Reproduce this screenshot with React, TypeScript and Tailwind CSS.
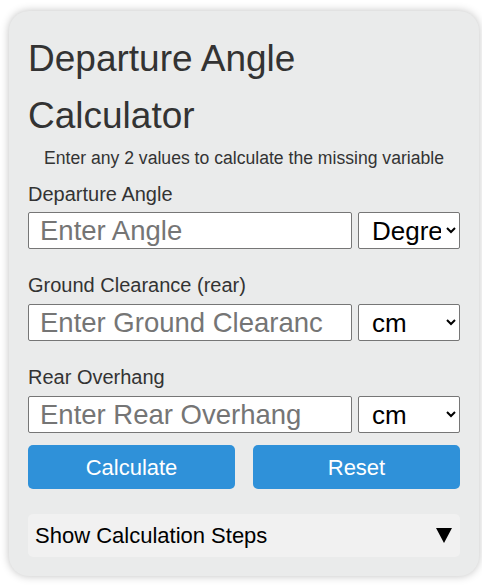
import React from "react";

const font = { fontFamily: '"Liberation Sans", Arial, sans-serif' };

function Row({ placeholder, unit }: { placeholder: string; unit: string }) {
  return (
    <div className="flex gap-[6px] h-[37px]">
      <input
        placeholder={placeholder}
        className="w-[324px] h-[37px] bg-white border border-[#767676] rounded-[2px] pl-[11px] pr-[28px] text-[27.5px] text-black placeholder:text-[#757575] outline-none"
      />
      <select
        defaultValue={unit}
        className="w-[102px] h-[37px] bg-white border border-[#767676] rounded-[2px] pl-[9px] pr-[2px] text-[26px] text-black outline-none"
      >
        <option>{unit}</option>
      </select>
    </div>
  );
}

export default function App() {
  return (
    <div className="w-[482px] h-[586px] bg-white pt-[11px] pl-[9px]" style={font}>
      <div className="w-[470px] h-[565px] bg-[#eaebeb] rounded-[20px] shadow-[0_0_8px_rgba(0,0,0,0.25)] px-[19px] pt-[19px]">
        <h1 className="text-[37px] leading-[57px] text-[#333]">
          Departure Angle Calculator
        </h1>
        <p className="mt-[4px] text-center text-[17.6px] leading-[20px] text-[#333]">
          Enter any 2 values to calculate the missing variable
        </p>
        <div className="mt-[15px] text-[20px] leading-[23px] text-[#333]">Departure Angle</div>
        <div className="mt-[6px]">
          <Row placeholder="Enter Angle" unit="Degrees" />
        </div>
        <div className="mt-[25px] text-[20px] leading-[23px] text-[#333]">Ground Clearance (rear)</div>
        <div className="mt-[7px]">
          <Row placeholder="Enter Ground Clearance" unit="cm" />
        </div>
        <div className="mt-[25px] text-[20px] leading-[23px] text-[#333]">Rear Overhang</div>
        <div className="mt-[7px]">
          <Row placeholder="Enter Rear Overhang" unit="cm" />
        </div>
        <div className="mt-[12px] flex gap-[18px]">
          <button className="w-[207px] h-[44px] bg-[#2f91d9] rounded-[5px] text-white text-[22px]">
            Calculate
          </button>
          <button className="w-[207px] h-[44px] bg-[#2f91d9] rounded-[5px] text-white text-[22px]">
            Reset
          </button>
        </div>
        <div className="mt-[25px] h-[43px] bg-[#f1f1f1] rounded-[5px] flex items-center justify-between pl-[7px] pr-[8px] text-[22px] text-black">
          <span>Show Calculation Steps</span>
          <svg width="16" height="15" viewBox="0 0 16 15" className="mt-[-1px]">
            <polygon points="0,0 16,0 8,15" fill="#000" />
          </svg>
        </div>
      </div>
    </div>
  );
}
